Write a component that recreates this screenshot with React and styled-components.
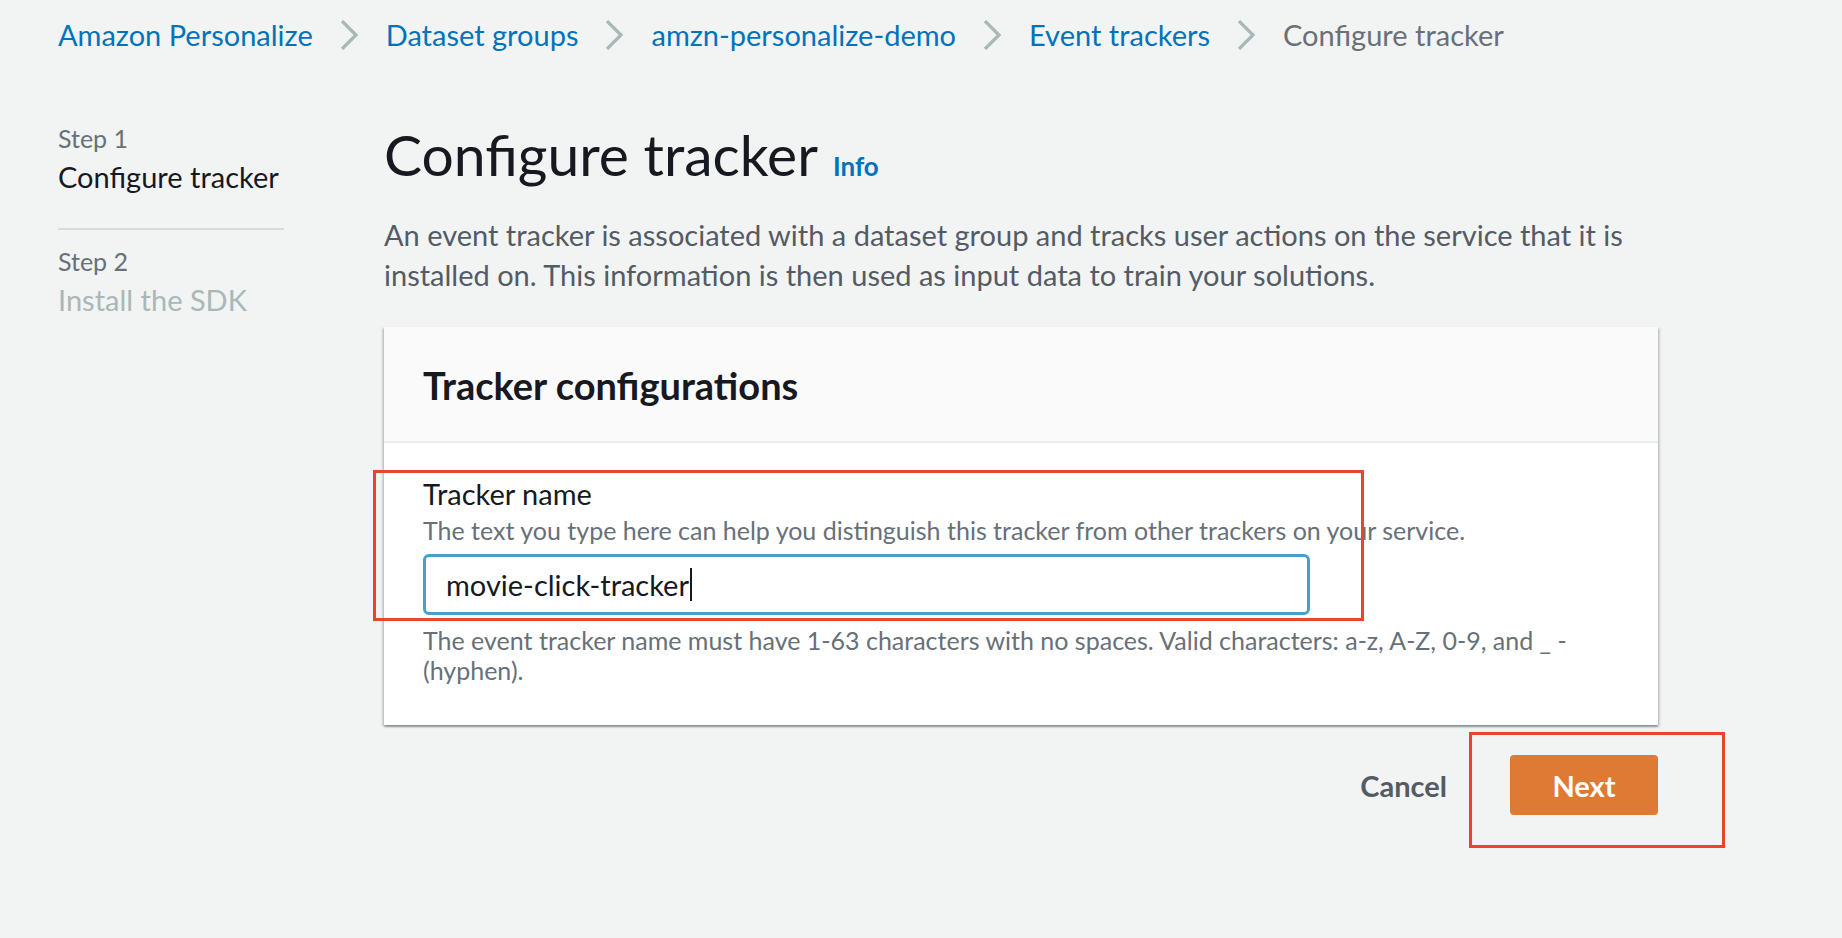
import React from "react";
import styled, { createGlobalStyle } from "styled-components";

const GlobalStyle = createGlobalStyle`
  html, body { margin: 0; padding: 0; }
  body {
    background: #f2f3f3;
    font-family: Lato, "Noto Sans", "Liberation Sans", sans-serif;
    color: #16191f;
  }
  * { box-sizing: border-box; }
`;

const Page = styled.div`
  width: 1842px;
  min-height: 938px;
  padding: 15px 0 0 58px;
`;

const Breadcrumbs = styled.nav`
  display: flex;
  align-items: center;
  gap: 27px;
  height: 40px;
  font-size: 29px;
  line-height: 40px;
`;

const Crumb = styled.a`
  color: ${(p) => (p.$current ? "#687078" : "#0073bb")};
  text-decoration: none;
  white-space: nowrap;
`;

const ChevronWrap = styled.span`
  display: inline-flex;
  width: 19px;
  height: 30px;
`;

const Chevron = () => (
  <ChevronWrap>
    <svg width="19" height="30" viewBox="0 0 19 30">
      <polyline points="2,1 16,15 2,29" fill="none" stroke="#aab7b8" strokeWidth="3.2" />
    </svg>
  </ChevronWrap>
);

const Layout = styled.div`
  display: grid;
  grid-template-columns: 226px 1274px;
  column-gap: 100px;
  margin-top: 67px;
`;

const SideNav = styled.aside`
  display: flex;
  flex-direction: column;
`;

const StepLabel = styled.div`
  font-size: 25px;
  line-height: 32px;
  color: #687078;
  margin-top: ${(p) => p.$mt || 0}px;
`;

const StepTitle = styled.div`
  font-size: 29px;
  line-height: 40px;
  margin-top: 3px;
  white-space: nowrap;
  color: ${(p) => (p.$muted ? "#aab7b8" : "#16191f")};
`;

const Divider = styled.hr`
  border: none;
  height: 2px;
  background: #d5dbdb;
  margin: 31px 0 0;
  width: 226px;
`;

const Main = styled.main`
  display: flex;
  flex-direction: column;
`;

const TitleRow = styled.div`
  display: flex;
  align-items: baseline;
  gap: 15px;
`;

const H1 = styled.h1`
  margin: 0;
  font-size: 57px;
  line-height: 64px;
  font-weight: 400;
  color: #16191f;
`;

const InfoLink = styled.a`
  font-size: 26px;
  font-weight: 700;
  color: #0073bb;
  text-decoration: none;
`;

const Description = styled.p`
  margin: 29px 0 0;
  font-size: 29px;
  line-height: 40px;
  color: #545b64;
`;

const Panel = styled.section`
  position: relative;
  margin-top: 32px;
  background: #ffffff;
  box-shadow: 0 2px 2px 0 rgba(0, 28, 36, 0.35), 2px 1px 2px 0 rgba(0, 28, 36, 0.12),
    -2px 1px 2px 0 rgba(0, 28, 36, 0.12);
`;

const PanelHeader = styled.header`
  background: #fafafa;
  padding: 34px 40px 32px 39px;
  border-bottom: 2px solid #eaeded;
`;

const H2 = styled.h2`
  margin: 0;
  font-size: 38px;
  line-height: 48px;
  font-weight: 700;
  color: #16191f;
`;

const PanelBody = styled.div`
  padding: 31px 40px 40px 39px;
`;

const Label = styled.div`
  font-size: 29px;
  line-height: 40px;
  color: #16191f;
`;

const Hint = styled.div`
  font-size: 25px;
  line-height: ${(p) => p.$lh || 32}px;
  color: #687078;
  margin-top: ${(p) => p.$mt || 0}px;
`;

const InputBox = styled.div`
  display: flex;
  align-items: center;
  width: 887px;
  height: 61px;
  margin-top: 8px;
  padding-left: 20px;
  border: 3px solid #47a0c9;
  border-radius: 6px;
  background: #fff;
  font-size: 29px;
  color: #16191f;
`;

const Caret = styled.span`
  display: inline-block;
  width: 2px;
  height: 33px;
  margin-left: 1px;
  background: #16191f;
`;

const Annotation = styled.div`
  position: absolute;
  left: ${(p) => p.$left}px;
  top: ${(p) => p.$top}px;
  width: ${(p) => p.$w}px;
  height: ${(p) => p.$h}px;
  border: 3px solid #e8452c;
  pointer-events: none;
`;

const Actions = styled.div`
  display: flex;
  justify-content: flex-end;
  align-items: center;
  gap: 63px;
  margin-top: 30px;
`;

const CancelButton = styled.button`
  background: none;
  border: none;
  padding: 0;
  font-family: inherit;
  font-size: 29px;
  font-weight: 700;
  color: #545b64;
`;

const NextWrap = styled.div`
  position: relative;
`;

const PrimaryButton = styled.button`
  width: 148px;
  height: 60px;
  border: none;
  border-radius: 4px;
  background: #df7a35;
  color: #fff;
  font-family: inherit;
  font-size: 29px;
  font-weight: 700;
`;

export default function App() {
  return (
    <>
      <GlobalStyle />
      <Page>
        <Breadcrumbs>
          <Crumb>Amazon Personalize</Crumb>
          <Chevron />
          <Crumb>Dataset groups</Crumb>
          <Chevron />
          <Crumb>amzn-personalize-demo</Crumb>
          <Chevron />
          <Crumb>Event trackers</Crumb>
          <Chevron />
          <Crumb $current>Configure tracker</Crumb>
        </Breadcrumbs>
        <Layout>
          <SideNav>
            <StepLabel>Step 1</StepLabel>
            <StepTitle>Configure tracker</StepTitle>
            <Divider />
            <StepLabel $mt={15}>Step 2</StepLabel>
            <StepTitle $muted>Install the SDK</StepTitle>
          </SideNav>
          <Main>
            <TitleRow>
              <H1>Configure tracker</H1>
              <InfoLink>Info</InfoLink>
            </TitleRow>
            <Description>
              An event tracker is associated with a dataset group and tracks user actions on the service that it is
              installed on. This information is then used as input data to train your solutions.
            </Description>
            <Panel>
              <PanelHeader>
                <H2>Tracker configurations</H2>
              </PanelHeader>
              <PanelBody>
                <Label>Tracker name</Label>
                <Hint>The text you type here can help you distinguish this tracker from other trackers on your service.</Hint>
                <InputBox>
                  movie-click-tracker
                  <Caret />
                </InputBox>
                <Hint $mt={10} $lh={30}>
                  The event tracker name must have 1-63 characters with no spaces. Valid characters: a-z, A-Z, 0-9, and _ -
                  (hyphen).
                </Hint>
              </PanelBody>
              <Annotation $left={-11} $top={143} $w={991} $h={151} />
            </Panel>
            <Actions>
              <CancelButton>Cancel</CancelButton>
              <NextWrap>
                <PrimaryButton>Next</PrimaryButton>
                <Annotation $left={-41} $top={-23} $w={256} $h={116} />
              </NextWrap>
            </Actions>
          </Main>
        </Layout>
      </Page>
    </>
  );
}
